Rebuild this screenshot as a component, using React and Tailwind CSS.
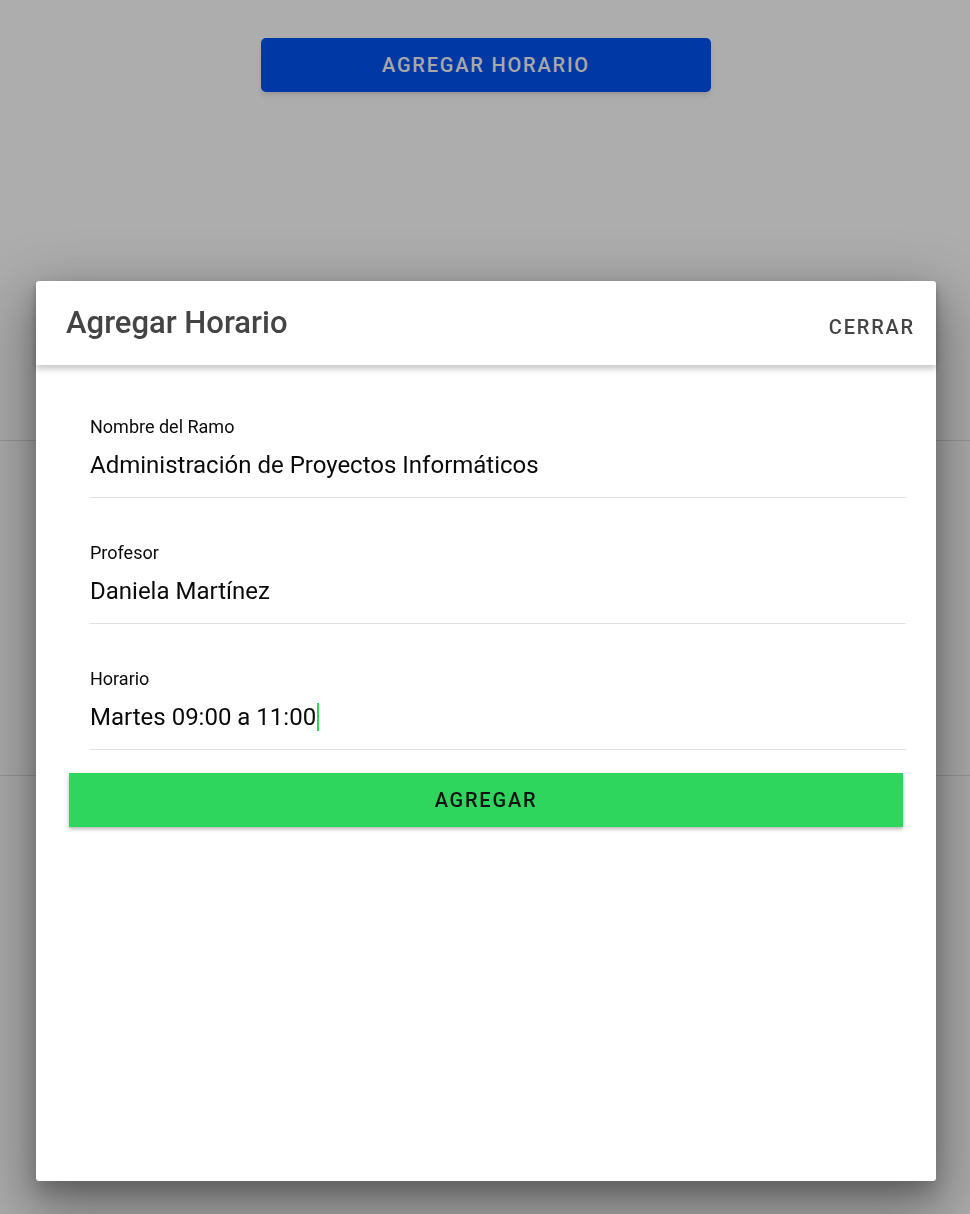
import React from "react";

const fields = [
  { label: "Nombre del Ramo", value: "Administración de Proyectos Informáticos" },
  { label: "Profesor", value: "Daniela Martínez" },
  { label: "Horario", value: "Martes 09:00 a 11:00", caret: true },
];

function Field({ label, value, caret }) {
  return (
    <div className="border-b border-[#e0e0e0] pb-[17px] mb-[45px] last:mb-0">
      <div className="text-[18px] leading-[20px] text-[#0a0a0a]">{label}</div>
      <div className="mt-[13px] flex items-center text-[24px] leading-[30px] text-[#0a0a0a]">
        <span>{value}</span>
        {caret && <span className="ml-[1px] h-[28px] w-[2px] bg-[#2ed65e]" />}
      </div>
    </div>
  );
}

export default function App() {
  return (
    <div className="relative min-h-[1214px] bg-white font-['Roboto',sans-serif]">
      <div className="flex justify-center pl-[2px] pt-[38px]">
        <button className="h-[54px] w-[450px] rounded-[5px] bg-[#0054f4] text-[20px] font-medium tracking-[1.8px] text-[#f8f8f8] shadow-md">
          AGREGAR HORARIO
        </button>
      </div>
      <div className="mt-[348px] border-b border-[#e0e0e0]" />
      <div className="h-[335px] border-b border-[#e0e0e0]" />

      <div className="fixed inset-0 bg-black/[0.32]" />

      <div className="absolute left-[36px] top-[281px] flex h-[900px] w-[900px] flex-col rounded-[3px] bg-white shadow-[0_24px_60px_10px_rgba(0,0,0,0.35),0_10px_20px_rgba(0,0,0,0.2)]">
        <div className="relative z-10 flex h-[84px] items-center justify-between pl-[30px] pr-[21px] shadow-[0_4px_6px_rgba(0,0,0,0.22)]">
          <h2 className="text-[31px] font-medium text-[#444]">Agregar Horario</h2>
          <button className="mt-[8px] text-[20px] font-medium tracking-[1.8px] text-[#444]">CERRAR</button>
        </div>
        <div className="pl-[54px] pr-[30px] pt-[52px]">
          {fields.map((f) => (
            <Field key={f.label} {...f} />
          ))}
        </div>
        <button className="ml-[33px] mt-[23px] h-[54px] w-[834px] bg-[#2ed65e] text-[20px] font-medium tracking-[1.8px] text-[#111] shadow-[0_2px_4px_rgba(0,0,0,0.3)]">
          AGREGAR
        </button>
      </div>
    </div>
  );
}
